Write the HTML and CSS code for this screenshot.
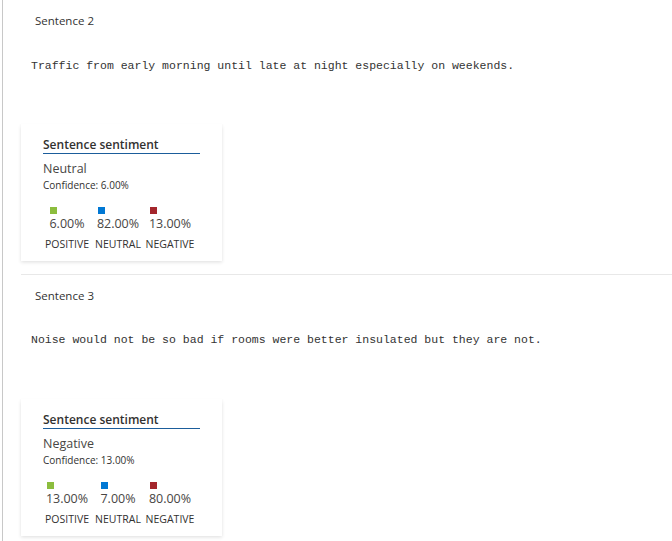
FILE: index.html
```html
<!DOCTYPE html>
<html>
<head>
<meta charset="utf-8">
<link rel="stylesheet" href="styles.css">
</head>
<body>
<div class="panel">
  <section class="sentence">
    <div class="label">Sentence 2</div>
    <div class="mono">Traffic from early morning until late at night especially on weekends.</div>
    <div class="card">
      <div class="card-title">Sentence sentiment</div>
      <div class="verdict">Neutral</div>
      <div class="confidence">Confidence: 6.00%</div>
      <div class="scores">
        <div class="col"><div class="val"><span class="sq pos"></span>6.00%</div><div class="cap">POSITIVE</div></div>
        <div class="col"><div class="val"><span class="sq neu"></span>82.00%</div><div class="cap">NEUTRAL</div></div>
        <div class="col"><div class="val"><span class="sq neg"></span>13.00%</div><div class="cap">NEGATIVE</div></div>
      </div>
    </div>
  </section>
  <section class="sentence">
    <div class="label">Sentence 3</div>
    <div class="mono">Noise would not be so bad if rooms were better insulated but they are not.</div>
    <div class="card">
      <div class="card-title">Sentence sentiment</div>
      <div class="verdict">Negative</div>
      <div class="confidence">Confidence: 13.00%</div>
      <div class="scores">
        <div class="col"><div class="val"><span class="sq pos"></span>13.00%</div><div class="cap">POSITIVE</div></div>
        <div class="col"><div class="val"><span class="sq neu"></span>7.00%</div><div class="cap">NEUTRAL</div></div>
        <div class="col"><div class="val"><span class="sq neg"></span>80.00%</div><div class="cap">NEGATIVE</div></div>
      </div>
    </div>
  </section>
</div>
</body>
</html>
```
FILE: styles.css
```css
html, body {
  margin: 0;
  padding: 0;
  background: #fff;
}
body {
  font-family: "Open Sans", "Noto Sans", sans-serif;
  color: #323130;
  height: 541px;
  overflow: hidden;
}
.panel {
  margin-left: 2px;
  border-left: 1px solid #c8c8c8;
  min-height: 541px;
  padding-left: 18px;
}
.sentence {
  border-top: 1px solid #e8e8e8;
  padding-bottom: 13px;
}
.sentence:first-child {
  margin-top: -1px;
}
.label {
  font-size: 11.5px;
  line-height: 16px;
  padding: 13px 0 0 14px;
  color: #333;
}
.mono {
  font-family: "Liberation Mono", "DejaVu Sans Mono", monospace;
  font-size: 11.5px;
  line-height: 16px;
  margin-top: 29px;
  padding-left: 10px;
  color: #333;
}
.sentence + .sentence .mono {
  margin-top: 28px;
}
.card {
  margin-top: 50px;
  width: 201px;
  box-sizing: border-box;
  padding: 13px 22px 10px;
  background: #fff;
  box-shadow: 0 1.6px 3.6px rgba(0,0,0,0.12), 0 0.3px 0.9px rgba(0,0,0,0.1);
}
.sentence + .sentence .card {
  margin-top: 51px;
}
.card-title {
  font-size: 12px;
  font-weight: 600;
  line-height: 16px;
  border-bottom: 1px solid #1b5d9b;
  color: #323130;
}
.verdict {
  font-size: 12.5px;
  line-height: 18px;
  margin-top: 6px;
  color: #484644;
}
.confidence {
  font-size: 10px;
  line-height: 14px;
  color: #323130;
}
.scores {
  display: grid;
  grid-template-columns: 48px 48px 50px;
  column-gap: 3px;
  margin-top: 15px;
}
.col {
  display: flex;
  flex-direction: column;
  align-items: center;
}
.val {
  font-size: 12.5px;
  line-height: 16px;
  margin-bottom: 1px;
  color: #484644;
}
.sq {
  display: block;
  width: 7px;
  height: 7px;
  margin: 0 0 2px 1px;
}
.pos { background: #8cbd3e; }
.neu { background: #0078d4; }
.neg { background: #a4262c; }
.cap {
  font-size: 10.5px;
  line-height: 14px;
  margin-top: 4px;
  color: #323130;
  white-space: nowrap;
}
```
